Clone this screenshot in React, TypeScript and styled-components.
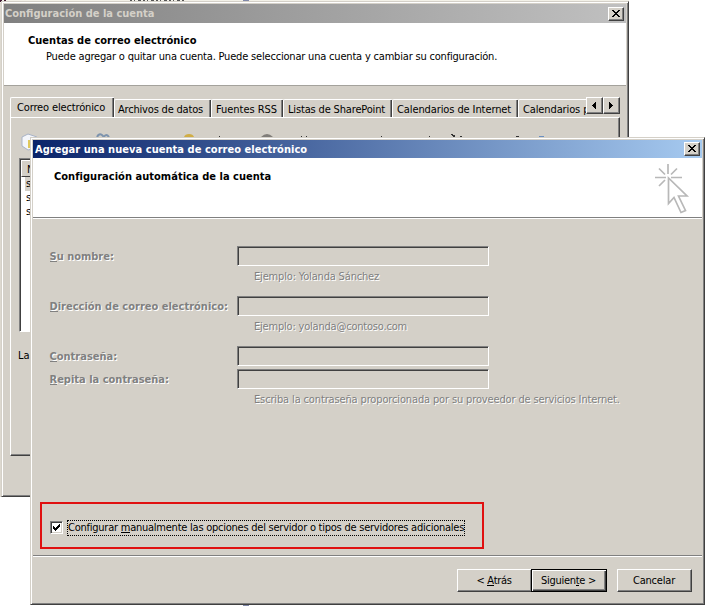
import React from "react";
import styled, { createGlobalStyle, css } from "styled-components";

const face = "#d4d0c8";
const shade = "#808080";
const dark = "#404040";

const GlobalStyle = createGlobalStyle`
  * { box-sizing: border-box; }
  body {
    margin: 0;
    background: #fff;
    font: 11px/13px "DejaVu Sans Condensed", "DejaVu Sans", sans-serif;
    color: #000;
  }
`;

const Desktop = styled.main`
  position: relative;
  width: 705px;
  height: 606px;
  overflow: hidden;
  background: #fff;
`;

const Backdrop = styled.svg`
  position: absolute;
  inset: 0;
`;

const Window = styled.section<{ $x: number; $y: number; $w: number; $h: number }>`
  position: absolute;
  left: ${(p) => p.$x}px;
  top: ${(p) => p.$y}px;
  width: ${(p) => p.$w}px;
  height: ${(p) => p.$h}px;
  display: flex;
  flex-direction: column;
  padding: 1px;
  background: ${face};
  border: 1px solid;
  border-color: ${face} ${dark} ${dark} ${face};
  box-shadow: inset 1px 1px #fff, inset -1px -1px ${shade};
`;

const WindowInner = styled.div`
  flex: 1;
  display: flex;
  flex-direction: column;
  padding: 1px;
  min-height: 0;
`;

const TitleBar = styled.header<{ $active?: boolean }>`
  flex: none;
  display: flex;
  align-items: center;
  justify-content: space-between;
  height: ${(p) => (p.$active ? 18 : 19)}px;
  padding: 0 2px 0 ${(p) => (p.$active ? 2 : 1)}px;
  font-weight: bold;
  white-space: nowrap;
  color: ${(p) => (p.$active ? "#fff" : face)};
  background: ${(p) =>
    p.$active
      ? "linear-gradient(90deg, #0a246a, #a6caf0)"
      : "linear-gradient(90deg, #808080, #c0c0c0)"};
`;

const Title = styled.span<{ $track?: number }>`
  letter-spacing: ${(p) => p.$track ?? 0}px;
`;

const raised = css`
  background: ${face};
  border: 1px solid;
  border-color: #fff ${dark} ${dark} #fff;
  box-shadow: inset -1px -1px ${shade};
`;

const CloseButton = styled.button`
  ${raised}
  display: grid;
  place-items: center;
  width: 16px;
  height: 14px;
  padding: 0 1px 1px 0;
`;

const Banner = styled.div<{ $height: number; $engraved?: boolean }>`
  flex: none;
  display: flex;
  justify-content: space-between;
  height: ${(p) => p.$height}px;
  background: #fff;
  border-bottom: 1px solid ${(p) => (p.$engraved ? shade : "#a4a29c")};
  box-shadow: ${(p) => (p.$engraved ? "0 1px #fff" : "none")};
`;

const BannerCopy = styled.div<{ $top: number; $left: number }>`
  padding: ${(p) => p.$top}px 0 0 ${(p) => p.$left}px;
  white-space: nowrap;
`;

const Heading = styled.h1<{ $track?: number }>`
  margin: 0;
  font: inherit;
  font-weight: bold;
  letter-spacing: ${(p) => p.$track ?? 0}px;
`;

const Summary = styled.p`
  margin: 3px 0 0 18px;
  letter-spacing: -0.19px;
`;

const ClickArt = styled.svg`
  flex: none;
  margin: 6px 12px 0 0;
`;

const TabStrip = styled.div`
  flex: none;
  display: flex;
  align-items: flex-end;
  height: 31px;
  margin-left: 6px;
  width: 610px;
`;

const Tab = styled.div<{ $w: number; $track: number; $pad?: number; $current?: boolean; $cut?: boolean }>`
  flex: none;
  width: ${(p) => p.$w}px;
  height: ${(p) => (p.$current ? 20 : 18)}px;
  padding: 3px 0 0 ${(p) => p.$pad ?? 4}px;
  letter-spacing: ${(p) => p.$track}px;
  white-space: nowrap;
  overflow: hidden;
  border: solid #fff;
  border-width: 1px 0 0 1px;
  border-radius: 2px ${(p) => (p.$cut ? 0 : 1)}px 0 0;
  box-shadow: ${(p) => (p.$cut ? "none" : `inset -1px 0 ${dark}, inset -2px 0 ${shade}`)};
`;

const Scroller = styled.div`
  flex: none;
  display: flex;
  height: 20px;
  align-items: flex-start;
`;

const ScrollButton = styled.button`
  ${raised}
  display: grid;
  place-items: center;
  width: 17px;
  height: 17px;
  padding: 0 1px 1px 0;
`;

const TabPanel = styled.div`
  flex: none;
  width: 610px;
  height: 339px;
  margin-left: 6px;
  padding: 14px 0 0 7px;
  border: 1px solid;
  border-color: #fff ${dark} ${dark} #fff;
  box-shadow: inset -1px -1px ${shade};
`;

const ToolIcons = styled.svg`
  display: block;
  margin-left: 2px;
`;

const AccountList = styled.div`
  width: 570px;
  height: 174px;
  margin: 2px 0 0 1px;
  background: #fff;
  border: 1px solid;
  border-color: ${shade} #fff #fff ${shade};
  box-shadow: inset 1px 1px ${dark};
  padding: 1px;
`;

const ListHeader = styled.div`
  height: 17px;
  padding: 2px 5px;
  background: ${face};
  border: 1px solid;
  border-color: #fff ${dark} ${dark} #fff;
`;

const ListRow = styled.div<{ $selected?: boolean }>`
  height: 14px;
  margin-left: 4px;
  padding-left: 1px;
  background: ${(p) => (p.$selected ? face : "transparent")};
`;

const FolderNote = styled.p`
  margin: 17px 0 0;
`;

const Form = styled.div`
  flex: 1;
  display: flex;
  flex-direction: column;
  padding: 28px 0 0 17px;
`;

const disabledText = css`
  color: ${shade};
  text-shadow: 1px 1px #fff;
  white-space: nowrap;
`;

const Field = styled.label<{ $gap: number }>`
  ${disabledText}
  display: grid;
  grid-template-columns: 187px 252px;
  align-items: center;
  height: 20px;
  margin-bottom: ${(p) => p.$gap}px;
  font-weight: bold;
`;

const FieldName = styled.span`
  margin-left: -0.5px;
`;

const Input = styled.input`
  width: 252px;
  height: 20px;
  background: ${face};
  border: 1px solid;
  border-color: ${shade} #fff #fff ${shade};
  box-shadow: inset 1px 1px ${dark};
`;

const Hint = styled.div<{ $track: number; $gap: number }>`
  ${disabledText}
  padding-left: 204px;
  letter-spacing: ${(p) => p.$track}px;
  margin-bottom: ${(p) => p.$gap}px;
`;

const Mnemonic = styled.span`
  border-bottom: 1px solid currentColor;
  display: inline-block;
  height: 12px;
  line-height: 13px;
`;

const Callout = styled.div`
  display: flex;
  align-items: center;
  width: 444px;
  height: 47px;
  margin: 96px 0 0 -10px;
  padding: 4px 0 0 8px;
  border: 2px solid #e01010;
`;

const CheckBox = styled.span`
  display: grid;
  place-items: center;
  width: 13px;
  height: 13px;
  background: #fff;
  border: 1px solid;
  border-color: ${shade} #fff #fff ${shade};
  box-shadow: inset 1px 1px ${dark}, inset -1px -1px ${face};
`;

const FocusText = styled.span`
  width: 398px;
  height: 16px;
  margin-left: 4px;
  border: 1px dotted #000;
  line-height: 14px;
  letter-spacing: -0.24px;
  white-space: nowrap;
`;

const Footer = styled.footer`
  flex: none;
  display: flex;
  justify-content: flex-end;
  height: 47px;
  padding: 13px 10px 0 0;
  border-top: 1px solid ${shade};
  box-shadow: inset 0 1px #fff;
`;

const Button = styled.button<{ $primary?: boolean; $spaced?: boolean; $track: number }>`
  ${raised}
  width: ${(p) => (p.$primary ? 76 : 75)}px;
  height: 23px;
  margin: 0 0 0 ${(p) => (p.$spaced ? 10 : p.$primary ? -1 : 0)}px;
  padding: 0 1px 1px 0;
  font: inherit;
  color: #000;
  letter-spacing: ${(p) => p.$track}px;
  ${(p) =>
    p.$primary &&
    css`
      border-color: #000;
      box-shadow: inset 1px 1px #fff, inset -1px -1px ${dark}, inset -2px -2px ${shade};
    `}
`;

const Cross = () => (
  <svg width="8" height="7" viewBox="0 0 8 7" shapeRendering="crispEdges">
    <path d="M0 0h2v1h1v1h2v-1h1v-1h2v1h-1v1h-1v1h-1v1h1v1h1v1h1v1h-2v-1h-1v-1h-2v1h-1v1h-2v-1h1v-1h1v-1h1v-1h-1v-1h-1v-1h-1z" />
  </svg>
);

const Arrow = ({ left }: { left?: boolean }) => (
  <svg width="4" height="7" viewBox="0 0 4 7" shapeRendering="crispEdges">
    <path d={left ? "M4 0v7L0 3.5z" : "M0 0v7L4 3.5z"} />
  </svg>
);

const tabs = [
  { label: "Archivos de datos", width: 97, track: -0.19, pad: 3 },
  { label: "Fuentes RSS", width: 72, track: -0.04 },
  { label: "Listas de SharePoint", width: 109, track: -0.16 },
  { label: "Calendarios de Internet", width: 126, track: -0.1 },
];

export default function App() {
  return (
    <>
      <GlobalStyle />
      <Desktop>
        <Backdrop width="705" height="606" shapeRendering="crispEdges">
          <path fill="#f3f1e8" d="M0 0h629v3h-629z" />
          <path fill="#ddd9d0" d="M0 3h1v494h-1z" />
          <path fill="#401830" d="M0 0h2v2h-2zM4 0h2v1h-2z" />
          <path stroke="#555" strokeDasharray="2 2 1 3 3 2" d="M130 .5h54" />
          <path fill="#8088a8" d="M243 0h6v1h-6zM243 605h6v1h-6z" />
        </Backdrop>

        <Window $x={1} $y={1} $w={628} $h={496}>
          <WindowInner>
            <TitleBar>
              <Title>Configuración de la cuenta</Title>
              <CloseButton aria-label="Cerrar"><Cross /></CloseButton>
            </TitleBar>
            <Banner $height={63}>
              <BannerCopy $top={11} $left={24}>
                <Heading $track={0.03}>Cuentas de correo electrónico</Heading>
                <Summary>
                  Puede agregar o quitar una cuenta. Puede seleccionar una cuenta y cambiar su configuración.
                </Summary>
              </BannerCopy>
            </Banner>
            <TabStrip>
              <Tab $current $w={104} $track={-0.14} $pad={6}>Correo electrónico</Tab>
              {tabs.map((t) => (
                <Tab key={t.label} $w={t.width} $track={t.track} $pad={t.pad}>{t.label}</Tab>
              ))}
              <Tab $cut $w={68} $track={-0.12}>Calendarios p</Tab>
              <Scroller>
                <ScrollButton aria-label="Anterior"><Arrow left /></ScrollButton>
                <ScrollButton aria-label="Siguiente"><Arrow /></ScrollButton>
              </Scroller>
            </TabStrip>
            <TabPanel>
              <ToolIcons width="540" height="24" viewBox="20 132 540 24">
                <path fill="#f4f6fb" stroke="#a9b3c6" d="M22 137l6-3 9 3v11l-9 2-6-4z" />
                <path fill="#dfc85c" d="M28 140h4v8h-4z" />
                <path fill="none" stroke="#7d93ad" strokeWidth="2" d="M97 137q2-4 5-2l2 2q2-4 5 0" />
                <path fill="#d0ad45" d="M184 137q1-3 5-3t5 3z" />
                <path fill="#807d79" d="M261 137q6-6 12 0z" />
                <path
                  stroke="#333"
                  d="M219 136.500h1M301 136.500h1M306 136.500h1M381 136.500h1M429 136.500h1M451 134.500h2M452 135.500h3M453 136.500h2M460 136.500h2M516 136.500h3"
                />
                <path fill="#6b8fc0" d="M539 136h5v1h-5z" />
              </ToolIcons>
              <AccountList>
                <ListHeader>N</ListHeader>
                <ListRow $selected>s</ListRow>
                <ListRow>s</ListRow>
                <ListRow>s</ListRow>
              </AccountList>
              <FolderNote>La</FolderNote>
            </TabPanel>
          </WindowInner>
        </Window>

        <Window $x={30} $y={137} $w={675} $h={468}>
          <WindowInner>
            <TitleBar $active>
              <Title $track={0.04}>Agregar una nueva cuenta de correo electrónico</Title>
              <CloseButton aria-label="Cerrar"><Cross /></CloseButton>
            </TitleBar>
            <Banner $height={60} $engraved>
              <BannerCopy $top={12} $left={21}>
                <Heading $track={0.03}>Configuración automática de la cuenta</Heading>
              </BannerCopy>
              <ClickArt width="36" height="51" viewBox="654 164 36 51" fill="none" stroke="#b8b8b8" strokeWidth="1.700">
                <path d="M668 164v10M655 177.500h11M671 177.500h11M659 168.500l6 6M677 168.500l-6 6M659 186l6-6" />
                <path d="M668.500 178v25.500l5.500-6 7 15 4.500-2-7-14.500h8.500z" />
              </ClickArt>
            </Banner>
            <Form>
              <Field $gap={4}>
                <FieldName><Mnemonic>S</Mnemonic>u nombre:</FieldName>
                <Input disabled />
              </Field>
              <Hint $track={-0.17} $gap={13}>Ejemplo: Yolanda Sánchez</Hint>
              <Field $gap={4}>
                <FieldName><Mnemonic>D</Mnemonic>irección de correo electrónico:</FieldName>
                <Input disabled />
              </Field>
              <Hint $track={-0.2} $gap={13}>Ejemplo: yolanda@contoso.com</Hint>
              <Field $gap={3}>
                <FieldName><Mnemonic>C</Mnemonic>ontraseña:</FieldName>
                <Input disabled />
              </Field>
              <Field $gap={4}>
                <FieldName><Mnemonic>R</Mnemonic>epita la contraseña:</FieldName>
                <Input disabled />
              </Field>
              <Hint $track={-0.14} $gap={0}>
                Escriba la contraseña proporcionada por su proveedor de servicios Internet.
              </Hint>
              <Callout>
                <CheckBox role="checkbox" aria-checked="true">
                  <svg width="7" height="7" viewBox="0 0 7 7" shapeRendering="crispEdges">
                    <path d="M0 2h1v1h1v1h1v-1h1v-1h1v-1h1v-1h1v3h-1v1h-1v1h-1v1h-1v1h-1v-1h-1v-1h-1z" />
                  </svg>
                </CheckBox>
                <FocusText>
                  Configurar <Mnemonic>m</Mnemonic>anualmente las opciones del servidor o tipos de servidores adicionales
                </FocusText>
              </Callout>
            </Form>
            <Footer>
              <Button $track={-0.31}>&lt; <Mnemonic>A</Mnemonic>trás</Button>
              <Button $primary $track={-0.28}>Siguien<Mnemonic>t</Mnemonic>e &gt;</Button>
              <Button $spaced $track={-0.21}>Cancelar</Button>
            </Footer>
          </WindowInner>
        </Window>
      </Desktop>
    </>
  );
}
